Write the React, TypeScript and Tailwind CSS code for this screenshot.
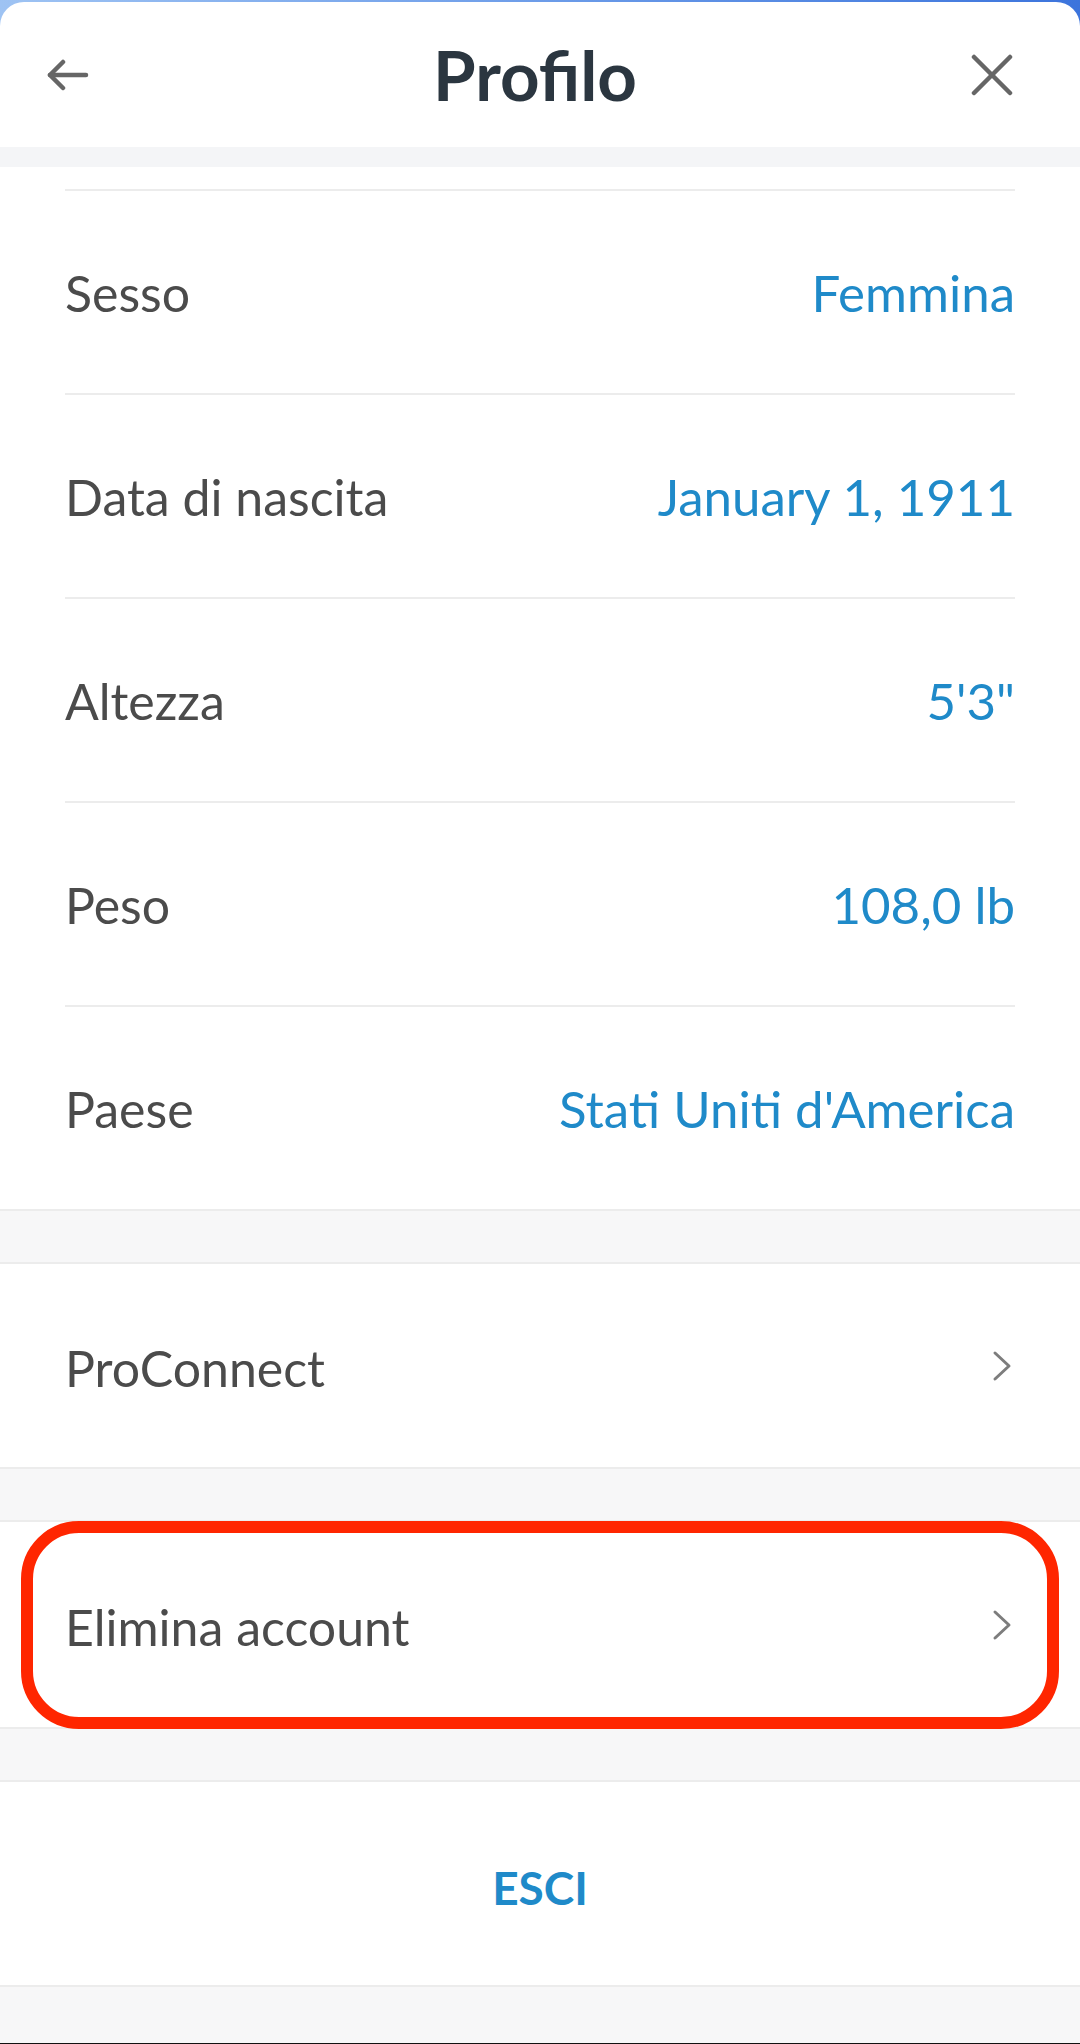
import React from "react";

const ROWS: { label: string; value: string }[] = [
  { label: "Sesso", value: "Femmina" },
  { label: "Data di nascita", value: "January 1, 1911" },
  { label: "Altezza", value: "5'3\"" },
  { label: "Peso", value: "108,0 lb" },
  { label: "Paese", value: "Stati Uniti d'America" },
];

function Chevron() {
  return (
    <svg width="20" height="32" viewBox="0 0 20 32" fill="none" stroke="#7d7d7d" strokeWidth={3} strokeLinecap="round" strokeLinejoin="round">
      <polyline points="3,3 17,16 3,29" />
    </svg>
  );
}

function Band() {
  return <div className="h-[55px] bg-[#f7f7f8] border-y-2 border-[#ececec]" />;
}

export default function App() {
  return (
    <div className="w-[1080px] h-[2044px] overflow-hidden bg-gradient-to-r from-[#9ec3f3] to-[#3c74dc] pt-[2px] font-['Lato',sans-serif]">
      <div className="h-full bg-white rounded-t-[24px] flex flex-col border-b border-[#111]">
        {/* header */}
        <div className="h-[145px] grid grid-cols-[1fr_auto_1fr] items-center">
          <div className="flex justify-start pl-[46px]">
            <svg width="43" height="32" viewBox="0 0 43 32" fill="none" stroke="#666" strokeWidth={4.5} strokeLinecap="round" strokeLinejoin="round">
              <line x1="40" y1="16" x2="4" y2="16" />
              <polyline points="17,3 4,16 17,29" />
            </svg>
          </div>
          <h1 className="text-[69px] font-bold text-[#2b3640] leading-none pr-[10px]">Profilo</h1>
          <div className="flex justify-end pr-[67px]">
            <svg width="42" height="42" viewBox="0 0 42 42" fill="none" stroke="#666" strokeWidth={4.5} strokeLinecap="round">
              <line x1="3" y1="3" x2="39" y2="39" />
              <line x1="39" y1="3" x2="3" y2="39" />
            </svg>
          </div>
        </div>
        <div className="h-[20px] bg-[#f4f5f7]" />
        <div className="h-[22px]" />

        {ROWS.map((r) => (
          <div key={r.label} className="mx-[65px] h-[204px] border-t-2 border-[#ececec] flex items-center justify-between text-[50px] pt-[3px]">
            <span className="text-[#4b4b4b]">{r.label}</span>
            <span className="text-[#1f8ac9] text-[51px]">{r.value}</span>
          </div>
        ))}

        <Band />
        <div className="h-[203px] px-[65px] flex items-center justify-between text-[50px] pt-[6px]">
          <span className="text-[#4b4b4b]">ProConnect</span>
          <span className="pr-[3px] -mt-[6px]"><Chevron /></span>
        </div>
        <Band />
        <div className="relative h-[205px] px-[65px] flex items-center justify-between text-[50px] pt-[6px]">
          <span className="text-[#4b4b4b]">Elimina account</span>
          <span className="pr-[3px] -mt-[6px]"><Chevron /></span>
          <div className="absolute left-[21px] right-[21px] top-[-1px] bottom-[-2px] border-[12px] border-[#ff2600] rounded-[58px]" />
        </div>
        <Band />
        <div className="h-[203px] flex items-center justify-center pt-[8px]">
          <span className="text-[46px] font-bold text-[#1f8ac9]">ESCI</span>
        </div>
        <div className="flex-1 bg-[#f7f7f8] border-t-2 border-[#ececec]" />
      </div>
    </div>
  );
}
